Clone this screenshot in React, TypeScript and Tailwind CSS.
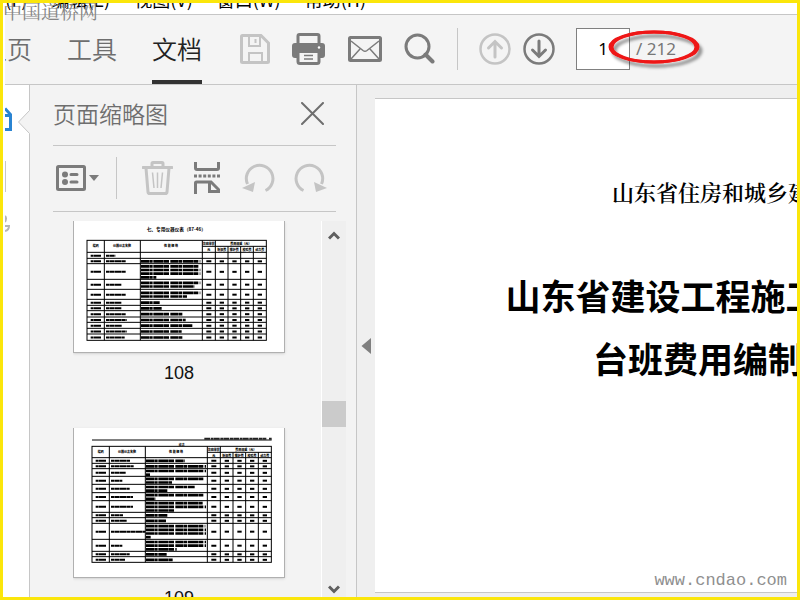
import type { ReactNode } from 'react'

type Line = [x: number, y: number, width: number]

interface SheetRow {
  y: number
  height: number
  name: number
  spec: number[]
}

interface Sheet {
  page: number
  viewBox: string
  size: string
  title: string
  titleX: number
  titleY: number
  left: number
  top: number
  rule?: Line
  rows: SheetRow[]
}

const MENUS = ['文件(F)', '编辑(E)', '视图(V)', '窗口(W)', '帮助(H)']
const TABS = ['主页', '工具', '文档']

// column edges, relative to the left side of the table
const COLS = [0, 52, 160, 346, 385, 423, 461, 499, 538]

const SHEETS: Sheet[] = [
  {
    page: 108,
    viewBox: '13 18 630 393',
    size: 'h-[131px] w-[210px]',
    title: '七、专用仪器仪表（87-46）',
    titleX: 320,
    titleY: 49,
    left: 52,
    top: 76,
    rows: [
      { y: 112, height: 18, name: 28, spec: [] },
      { y: 130, height: 16, name: 60, spec: [178] },
      { y: 146, height: 47, name: 60, spec: [176, 178, 178, 46] },
      { y: 193, height: 30, name: 46, spec: [178, 160] },
      { y: 223, height: 30, name: 60, spec: [178, 138] },
      { y: 253, height: 18, name: 46, spec: [56] },
      { y: 271, height: 16, name: 46, spec: [62] },
      { y: 287, height: 19, name: 60, spec: [126] },
      { y: 306, height: 16, name: 62, spec: [134] },
      { y: 322, height: 18, name: 48, spec: [154] },
      { y: 340, height: 17, name: 62, spec: [122] },
      { y: 357, height: 19, name: 56, spec: [126] },
    ],
  },
  {
    page: 109,
    viewBox: '13 9 630 447',
    size: 'h-[149px] w-[210px]',
    title: '续表',
    titleX: 336,
    titleY: 62,
    left: 67,
    top: 64,
    rule: [67, 45, 539],
    rows: [
      { y: 98, height: 17, name: 58, spec: [116] },
      { y: 115, height: 16, name: 68, spec: [180] },
      { y: 131, height: 23, name: 44, spec: [180, 12] },
      { y: 154, height: 24, name: 34, spec: [176, 78] },
      { y: 178, height: 25, name: 56, spec: [146, 64] },
      { y: 203, height: 24, name: 66, spec: [176, 28] },
      { y: 227, height: 35, name: 66, spec: [170, 180, 88] },
      { y: 262, height: 16, name: 36, spec: [64] },
      { y: 278, height: 17, name: 48, spec: [60] },
      { y: 295, height: 48, name: 102, spec: [178, 180, 180, 14] },
      { y: 343, height: 36, name: 34, spec: [180, 180, 92] },
      { y: 379, height: 16, name: 56, spec: [62] },
      { y: 395, height: 17, name: 42, spec: [80] },
    ],
  },
]

function SheetDrawing({ sheet }: { sheet: Sheet }) {
  const { left, top, rows, rule } = sheet
  const last = rows[rows.length - 1]
  const bottom = last.y + last.height
  const right = left + 538
  const mid = top + 18
  const font = "'Noto Sans CJK SC', sans-serif"

  return (
    <svg viewBox={sheet.viewBox} className={`block ${sheet.size}`} role="img" aria-label={`第 ${sheet.page} 页`}>
      <text x={sheet.titleX} y={sheet.titleY} fontSize={rule ? 9 : 14} fontWeight="700" fontFamily={font} textAnchor="middle">
        {sheet.title}
      </text>
      {rule && (
        <>
          <path d={`M${rule[0]} ${rule[1]}h${rule[2]}`} stroke="#000" strokeWidth="3" />
          <path d="M404 41H590M598 41h8" stroke="#222" strokeWidth="6" strokeDasharray="17 2 9 1" />
        </>
      )}
      <g stroke="#000" strokeWidth="3" fill="none">
        <rect x={left} y={top} width={538} height={bottom - top} />
        {COLS.slice(1, -1).map((c, i) => (
          <path key={c} d={`M${left + c} ${i > 3 ? mid : top}V${bottom}`} />
        ))}
        <path d={`M${left + 346} ${mid}H${right}`} />
        {rows.map((r) => (
          <path key={r.y} d={`M${left} ${r.y}H${right}`} />
        ))}
      </g>
      <g fontSize="9" fontWeight="900" fontFamily={font} textAnchor="middle">
        <text x={left + 26} y={top + 21}>编码</text>
        <text x={left + 105} y={top + 21}>仪器仪表名称</text>
        <text x={left + 252} y={top + 21}>性 能 规 格</text>
        <text x={left + 365} y={top + 13}>台班单价</text>
        <text x={left + 461} y={top + 13}>费用组成（元）</text>
        <text x={left + 365} y={top + 31}>元</text>
        <text x={left + 404} y={top + 31}>折旧费</text>
        <text x={left + 442} y={top + 31}>维护费</text>
        <text x={left + 480} y={top + 31}>校验费</text>
        <text x={left + 518} y={top + 31}>动力费</text>
      </g>
      {rows.map((r) => {
        const cy = r.y + r.height / 2 + 1
        const step = 11
        const first = cy - ((r.spec.length - 1) * step) / 2
        return (
          <g key={r.y} stroke="#000" strokeWidth="6">
            <path d={`M${left + 11} ${cy}h31`} strokeDasharray="9 1 21 1" />
            <path d={`M${left + 57} ${cy}h${r.name}`} strokeDasharray="9 1 14 1 22 1" />
            {r.spec.map((w, i) => (
              <path key={i} d={`M${left + 162} ${first + i * step}h${w}`} strokeDasharray="24 1 10 2 31 1 15 4" strokeWidth="8" />
            ))}
            {r.spec.length > 0 &&
              [366, 404, 442, 480, 518].map((c, i) => (
                <path key={c} d={`M${left + c - (i ? 6 : 8)} ${cy}h${i ? 13 : 16}`} strokeDasharray="14 1" />
              ))}
          </g>
        )
      })}
    </svg>
  )
}

function IconButton({ label, className = '', children }: { label: string; className?: string; children: ReactNode }) {
  return (
    <button type="button" aria-label={label} title={label} className={`shrink-0 ${className}`}>
      {children}
    </button>
  )
}

function Toolbar() {
  return (
    <div className="flex h-[70px] shrink-0 items-center overflow-hidden border-b border-[#c6c6c6] bg-[#f4f4f4] pb-[2px]">
      <nav className="-mb-[2px] flex w-[197px] shrink-0 justify-end gap-[35px] self-stretch overflow-hidden text-[25px]">
        {TABS.map((tab) => (
          <a
            key={tab}
            href="#"
            className={`flex shrink-0 items-center border-b-4 pt-[2px] font-[350] ${tab === '文档' ? 'border-[#323232] text-[#222]' : 'border-transparent text-[#6e6e6e]'}`}
          >
            {tab}
          </a>
        ))}
      </nav>
      <IconButton label="保存" className="ml-[38px]">
        <svg width="30" height="30" viewBox="0 0 30 30" fill="none" stroke="#c4c4c4" className="block">
          <path d="M2.5 1.5H21L28.5 9V27.5Q28.5 28.5 27.5 28.5H2.5Q1.5 28.5 1.5 27.5V2.5Q1.5 1.5 2.5 1.5Z" strokeWidth="3" />
          <path d="M9 2V12H20V2M9 28V19H22V28" strokeWidth="2" />
          <path d="M15.5 5v4" strokeWidth="2" />
        </svg>
      </IconButton>
      <IconButton label="打印" className="ml-[22px]">
        <svg width="33" height="32" viewBox="0 0 33 32" className="block">
          <path d="M6 11V3Q6 1.500 7.500 1.500H25.500Q27 1.500 27 3V11" fill="#f4f4f4" stroke="#7b7b7b" strokeWidth="3" />
          <path d="M3 10H30Q33 10 33 13V22Q33 25 30 25H3Q0 25 0 22V13Q0 10 3 10Z" fill="#7b7b7b" />
          <path d="M6 18.500H27V28.500Q27 30.500 25 30.500H8Q6 30.500 6 28.500Z" fill="#f4f4f4" stroke="#7b7b7b" strokeWidth="3" />
          <path d="M12 22.500h9M12 26h9" stroke="#7b7b7b" strokeWidth="1.500" />
          <circle cx="27" cy="14.500" r="1.200" fill="#fff" />
        </svg>
      </IconButton>
      <IconButton label="邮件" className="ml-[23px]">
        <svg width="34" height="26" viewBox="0 0 34 26" fill="none" stroke="#7b7b7b" className="block">
          <rect x="1.500" y="1.500" width="31" height="23" rx="1" strokeWidth="3" />
          <path d="M3 5L15 14.500Q17 16 19 14.500L31 5M3 23L12 13M31 23L22 13" strokeWidth="1.500" />
        </svg>
      </IconButton>
      <IconButton label="查找" className="ml-[22px]">
        <svg width="31" height="31" viewBox="0 0 31 31" fill="none" stroke="#7b7b7b" className="block">
          <circle cx="13.500" cy="13.500" r="11.500" strokeWidth="3" />
          <path d="M21.500 21.500L28.500 28.500" strokeWidth="4" strokeLinecap="round" />
        </svg>
      </IconButton>
      <div className="ml-[22px] h-[42px] w-px shrink-0 bg-[#c6c6c6]" />
      <IconButton label="上一页" className="ml-[21px]">
        <svg width="32" height="32" viewBox="0 0 32 32" fill="none" stroke="#c4c4c4" strokeWidth="3" className="block">
          <circle cx="16" cy="16" r="14.500" strokeWidth="2.500" />
          <path d="M16 24V9M9.500 15L16 8.500L22.500 15" strokeLinecap="round" />
        </svg>
      </IconButton>
      <IconButton label="下一页" className="ml-3">
        <svg width="32" height="32" viewBox="0 0 32 32" fill="none" stroke="#7b7b7b" strokeWidth="3" className="block">
          <circle cx="16" cy="16" r="14.500" strokeWidth="2.500" />
          <path d="M16 8V23M9.500 17L16 23.500L22.500 17" strokeLinecap="round" />
        </svg>
      </IconButton>
      <div className="relative ml-[21px] flex shrink-0 items-center font-['Noto_Sans'] text-[17px]">
        <input aria-label="页码" defaultValue="1" className="h-[42px] w-[54px] border border-[#808080] bg-white text-center text-black outline-none" />
        <span className="ml-[6px] pt-px text-[#777]">/ 212</span>
        <svg width="100" height="46" viewBox="0 0 100 46" fill="none" className="pointer-events-none absolute top-0 left-[30px]">
          <defs>
            <filter id="ringShadow" x="-10%" y="-20%" width="120%" height="150%">
              <feDropShadow dx="3" dy="4" stdDeviation="1.500" floodColor="#000" floodOpacity="0.400" />
            </filter>
          </defs>
          <g filter="url(#ringShadow)" stroke="#ee1414" strokeWidth="3">
            <ellipse cx="48" cy="19" rx="44" ry="15" />
            <ellipse cx="48" cy="19" rx="42" ry="15" />
          </g>
        </svg>
      </div>
    </div>
  )
}

function Rail() {
  return (
    <div className="flex w-[25px] shrink-0 flex-col overflow-hidden border-r border-[#c6c6c6] bg-white pt-[22px]">
      <IconButton label="页面缩略图" className="self-start">
        <svg width="8" height="24" viewBox="0 0 8 24" fill="none" stroke="#2a84d2" strokeWidth="3" className="block">
          <path d="M0 1.500L5.500 7.500V22.500H0M0 8.500H4" />
        </svg>
      </IconButton>
      <div className="mt-[30px] h-[31px] w-px bg-[#c6c6c6]" />
      <IconButton label="附件" className="mt-[23px] self-start">
        <svg width="6" height="18" viewBox="0 0 6 18" fill="none" stroke="#b5b5b5" strokeWidth="2" className="block">
          <path d="M0 1Q2 3 0 7M0 16Q4 15 4 11H0" />
        </svg>
      </IconButton>
    </div>
  )
}

function RotateIcon({ clockwise = false }: { clockwise?: boolean }) {
  return (
    <svg width="34" height="30" viewBox="0 0 34 30" className="block">
      <g transform={clockwise ? 'translate(34 0) scale(-1 1)' : undefined}>
        <path d="M23.500 27.500A13.300 13.300 0 1 0 5.500 21" fill="none" stroke="#c4c4c4" strokeWidth="3" />
        <path d="M0 25L13 19L11 29Z" fill="#c4c4c4" />
      </g>
    </svg>
  )
}

function ThumbnailPanel() {
  return (
    <aside className="relative flex w-[327px] shrink-0 flex-col border-r border-[#c6c6c6] bg-[#f3f3f3]">
      {/* pointer towards the active rail icon */}
      <svg width="12" height="24" viewBox="0 0 12 24" className="absolute top-[25px] -left-[12px]">
        <path d="M12 0V24L0.500 12Z" fill="#f3f3f3" />
        <path d="M11.500 0.500L0.500 12L11.500 23.500" fill="none" stroke="#c6c6c6" />
      </svg>
      <div className="mr-5 ml-[23px] flex h-[61px] shrink-0 items-center border-b border-[#c6c6c6] pb-[3px]">
        <h2 className="text-[23px] font-[350] text-[#6e6e6e]">页面缩略图</h2>
        <IconButton label="关闭" className="mr-3 ml-auto">
          <svg width="23" height="23" viewBox="0 0 23 23" fill="none" stroke="#6e6e6e" strokeWidth="2" className="block">
            <path d="M1 1L22 22M22 1L1 22" strokeLinecap="round" />
          </svg>
        </IconButton>
      </div>
      <div className="mr-5 ml-[23px] flex h-[66px] shrink-0 items-center border-b border-[#c6c6c6] pb-px">
        <IconButton label="选项" className="ml-[3px]">
          <svg width="44" height="26" viewBox="0 0 44 26" fill="none" stroke="#7b7b7b" className="block">
            <rect x="1.500" y="1.500" width="27" height="23" rx="1" strokeWidth="3" />
            <path d="M15 9.500h6M15 17h6" strokeWidth="3" strokeLinecap="round" />
            <circle cx="9" cy="9.500" r="3" fill="#7b7b7b" stroke="none" />
            <circle cx="9" cy="17" r="3" fill="#7b7b7b" stroke="none" />
            <path d="M33 10H43L38 16Z" fill="#7b7b7b" stroke="none" />
          </svg>
        </IconButton>
        <div className="ml-4 h-[42px] w-px shrink-0 bg-[#c6c6c6]" />
        <IconButton label="删除页面" className="ml-[25px]">
          <svg width="31" height="34" viewBox="0 0 31 34" fill="none" stroke="#c4c4c4" className="block">
            <path d="M1 6.500H30M10 6V2.500Q10 1.500 11 1.500H20Q21 1.500 21 2.500V6M4 7L6 31Q6.200 32.500 7.500 32.500H23.500Q24.800 32.500 25 31L27 7" strokeLinecap="round" strokeWidth="3" />
            <path d="M10.500 11.500L12 27M15.500 11.500V27M20.500 11.500L19 27" strokeWidth="1.500" />
          </svg>
        </IconButton>
        <IconButton label="拆分页面" className="ml-[21px]">
          <svg width="26" height="32" viewBox="0 0 26 32" fill="none" stroke="#7b7b7b" strokeWidth="3" className="block">
            <path d="M1.500 0V6Q1.500 7.500 3 7.500H23Q24.500 7.500 24.500 6V0M1.500 32V21Q1.500 20 2.500 20H17L24.500 27.500V29.500H15.500V20" />
            <path d="M0 14H26" strokeDasharray="3 1.600" />
          </svg>
        </IconButton>
        <IconButton label="逆时针旋转" className="ml-[22px]">
          <RotateIcon />
        </IconButton>
        <IconButton label="顺时针旋转" className="ml-[17px]">
          <RotateIcon clockwise />
        </IconButton>
      </div>
      <div className="mt-[9px] flex min-h-0 flex-1">
        <ul className="ml-[43px] flex min-h-0 flex-1 flex-col items-start gap-11 overflow-hidden">
          {SHEETS.map((sheet) => (
            <li key={sheet.page} className="flex shrink-0 flex-col items-center font-['Liberation_Sans'] text-lg leading-[22px] text-[#111]">
              <div className="border-x border-b border-[#b0b0b0] bg-white shadow">
                <SheetDrawing sheet={sheet} />
              </div>
              <span className="mt-[9px]">{sheet.page}</span>
            </li>
          ))}
        </ul>
        <div className="mr-[10px] flex w-[25px] shrink-0 flex-col items-center border-l border-white bg-[#efefef] py-[3px]">
          <IconButton label="向上滚动" className="mt-[7px]">
            <svg width="12" height="9" viewBox="0 0 12 9" fill="none" stroke="#5f5f5f" strokeWidth="3" className="block">
              <path d="M1 7.500L6 2.500L11 7.500" />
            </svg>
          </IconButton>
          <div className="mt-[161px] h-[26px] w-full bg-[#cbcbcb]" />
          <IconButton label="向下滚动" className="mt-auto">
            <svg width="12" height="9" viewBox="0 0 12 9" fill="none" stroke="#5f5f5f" strokeWidth="3" className="block">
              <path d="M1 1.500L6 6.500L11 1.500" />
            </svg>
          </IconButton>
        </div>
      </div>
    </aside>
  )
}

export default function App() {
  return (
    <div className="relative flex h-screen flex-col overflow-hidden border-[3px] border-[#fbe60b] bg-white pl-[2px] font-['Noto_Sans_CJK_SC',sans-serif]">
      <div className="flex h-[12px] shrink-0 overflow-hidden border-b border-[#c6c6c6]">
        <nav className="flex w-[361px] shrink-0 items-end justify-end gap-6 overflow-hidden pb-[5px] text-lg leading-5 text-black">
          {MENUS.map((menu) => (
            <a key={menu} href="#" className="shrink-0">
              {menu}
            </a>
          ))}
        </nav>
      </div>
      <Toolbar />
      <div className="flex min-h-0 flex-1">
        <Rail />
        <ThumbnailPanel />
        <main className="flex min-w-0 flex-1 bg-[#efefef]">
          <div className="flex w-[18px] shrink-0 flex-col items-center pt-[252px]">
            <IconButton label="折叠面板">
              <svg width="10" height="18" viewBox="0 0 10 18" className="block">
                <path d="M10 1V17L0.500 9Z" fill="#7f7f7f" />
              </svg>
            </IconButton>
          </div>
          <div className="mt-[13px] mb-1 min-w-0 flex-1 overflow-hidden border-y border-[#c6c6c6] bg-white">
            <article className="flex w-[716px] flex-col items-center pt-[79px] whitespace-nowrap text-black">
              <p className="font-['Liberation_Serif','Noto_Serif_CJK_SC','Noto_Sans_CJK_SC',serif] text-[22px] leading-8 font-semibold">
                山东省住房和城乡建设厅
              </p>
              <h1 className="mt-[53px] text-center text-[35px] leading-[63px] font-bold">
                山东省建设工程施工仪器仪表
                <br />
                台班费用编制规则
              </h1>
            </article>
          </div>
        </main>
      </div>
      {/* watermarks */}
      <div className="pointer-events-none absolute top-0 left-0 font-['Liberation_Serif','Noto_Serif_CJK_SC','Noto_Sans_CJK_SC',serif] text-[19px] leading-5 text-[#858585]">
        中国道桥网
      </div>
      <div className="pointer-events-none absolute right-[10px] bottom-1 font-['Liberation_Mono'] text-[17px] leading-6 text-[#8f8f8f]">www.cndao.com</div>
    </div>
  )
}
